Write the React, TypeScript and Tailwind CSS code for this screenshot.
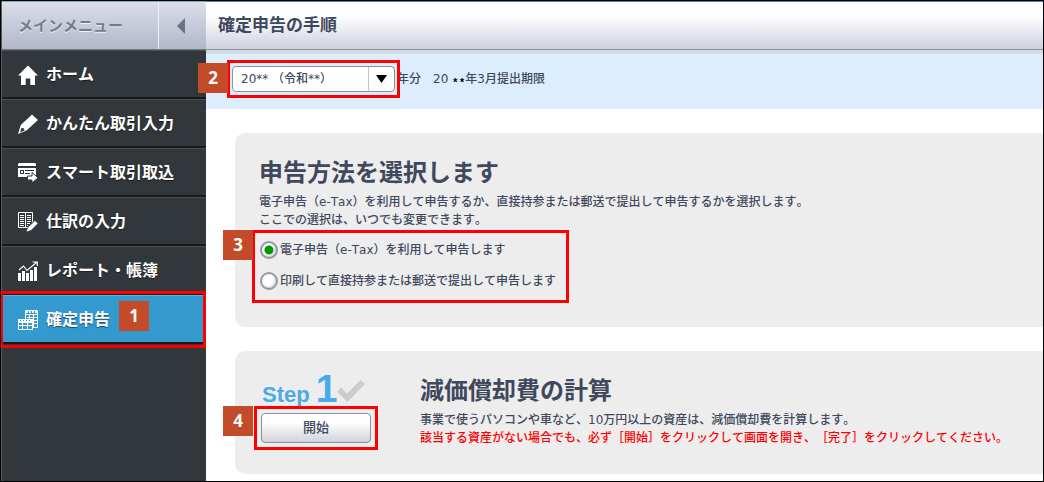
import React from "react";

type IconProps = { className?: string };

const HomeIcon = ({ className }: IconProps) => (
  <svg viewBox="0 0 20 20" className={className} fill="currentColor" aria-hidden="true">
    <path d="M10 0.5 L20 10.5 H17 V20 H12.3 V13.5 H7.7 V20 H3 V10.5 H0 Z" />
  </svg>
);

const PencilIcon = ({ className }: IconProps) => (
  <svg viewBox="0 0 20 20" className={className} fill="currentColor" aria-hidden="true">
    <path fillRule="evenodd" d="M14 0.5 L20 6 L8.5 16.5 L0 20 L2.8 11 Z M3.6 13.8 L2 18.2 L6.5 16.4 L6 14.4 Z" />
  </svg>
);

const CardImportIcon = ({ className }: IconProps) => (
  <svg viewBox="0 0 20 20" className={className} fill="currentColor" aria-hidden="true">
    <path d="M1 0 H17 L18 1 V3 H0 V1 Z" />
    <path fillRule="evenodd" d="M0 5 H18 V14 H0 Z M2 7 V11 H6 V7 Z M3 8 H5 V10 H3 Z M7 7 V8 H16 V7 Z M7 10 V11 H12 V10 Z" />
    <path d="M9.5 13 H14 V9.5 L20 14.8 L14 20 V17 H9.5 Z" stroke="#32373b" strokeWidth="1" />
  </svg>
);

const JournalIcon = ({ className }: IconProps) => (
  <svg viewBox="0 0 20 20" className={className} aria-hidden="true">
    <path d="M0.5 0.5 H14.5 V10 M0.5 0.5 V15.5 H10 M7.5 0.5 V15" fill="none" stroke="currentColor" />
    <path d="M2 3.5 H6 M2 5.5 H6 M2 7.5 H6 M2 9.5 H6 M2 11.5 H6 M2 13.5 H6 M9 3.5 H13 M9 5.5 H13 M9 7.5 H13 M9 9.5 H13 M9 11.5 H12 M9 13.5 H10" stroke="currentColor" />
    <path d="M17 8.5 L20 11.5 L13 18.5 L8 20 L9.8 15.5 Z" fill="currentColor" stroke="#32373b" strokeWidth="0.6" />
  </svg>
);

const ReportIcon = ({ className }: IconProps) => (
  <svg viewBox="0 0 20 20" className={className} aria-hidden="true">
    <path d="M0 12 H3 V20 H0 Z M4 10 H7 V20 H4 Z M8 12 H11 V20 H8 Z M12 9 H15 V20 H12 Z M16 6 H19 V20 H16 Z" fill="currentColor" />
    <path d="M1 9 L5.5 5 L9 9.5 L19 1 M14.5 1 H19.3 V5" fill="none" stroke="currentColor" strokeWidth="1.2" />
  </svg>
);

const TaxIcon = ({ className }: IconProps) => (
  <svg viewBox="0 0 20 20" className={className} aria-hidden="true">
    <path d="M7.5 9 V0.5 H19.5 V17.5 H15" fill="none" stroke="currentColor" />
    <path d="M8 2 H19" stroke="currentColor" strokeWidth="2" strokeDasharray="2 1" />
    <path d="M8 4.5 H19 M9 7.5 H19 M15 10.5 H19 M15 13.5 H19 M11.5 5 V9 M15.5 5 V17" stroke="currentColor" />
    <path fillRule="evenodd" d="M0 9 H15 V20 H0 Z M1 13 V15 H4 V13 Z M5 13 V15 H9 V13 Z M10 13 V15 H14 V13 Z M1 16 V19 H4 V16 Z M5 16 V19 H9 V16 Z M10 16 V19 H14 V16 Z M2 10 V11 H3 V10 Z M5 10 V11 H6 V10 Z M8 10 V11 H9 V10 Z M11 10 V11 H12 V10 Z" fill="currentColor" />
  </svg>
);

const menu = [
  { label: "ホーム", Icon: HomeIcon },
  { label: "かんたん取引入力", Icon: PencilIcon },
  { label: "スマート取引取込", Icon: CardImportIcon },
  { label: "仕訳の入力", Icon: JournalIcon },
  { label: "レポート・帳簿", Icon: ReportIcon },
  { label: "確定申告", Icon: TaxIcon, active: true },
];

const Badge = ({ n, className }: { n: number; className: string }) => (
  <span
    className={`absolute z-20 flex size-[30px] items-center justify-center bg-[#c44b29] font-['Open_Sans',sans-serif] text-[17px] font-bold text-white ${className}`}
  >
    {n}
  </span>
);

const Frame = ({ className }: { className: string }) => (
  <span className={`pointer-events-none absolute z-10 border-[3px] border-[#ff0000] ${className}`} />
);

const Stars = () => (
  <span className="align-sub font-['Liberation_Mono',monospace] text-[11px] leading-none font-bold text-black">**</span>
);

const radioClass =
  "size-[18px] shrink-0 appearance-none rounded-full border-2 border-[#9499a6] bg-white shadow-[inset_-1px_-1px_2px_#c5c8d0] checked:bg-[radial-gradient(circle,#009a00_0_4px,#ffffff_5px)]";

function Sidebar() {
  return (
    <aside className="flex w-[205px] shrink-0 flex-col border-l border-[#5c5c5c] bg-[#32373b]">
      <div className="flex h-[49px] border-t border-b border-t-[#7fa6c4] border-b-[#6f7480] bg-linear-to-b from-[#dcdfe9] to-[#b1b7c9]">
        <h2 className="flex-1 pl-4 text-[15px] leading-[48px] font-bold text-[#727b90] [text-shadow:0_1px_0_#eef0f6]">
          メインメニュー
        </h2>
        <button
          type="button"
          aria-label="メニューを閉じる"
          className="flex w-12 items-center justify-center border-l border-[#f0f2f7] pr-1"
        >
          <svg viewBox="0 0 8 16" className="h-4 w-2" fill="#68728a" aria-hidden="true">
            <path d="M8 0 V16 L0 8 Z" />
          </svg>
        </button>
      </div>
      <nav>
        <ul>
          {menu.map(({ label, Icon, active }) => (
            <li key={label} className="relative">
              <a
                href="#"
                aria-current={active ? "page" : undefined}
                className={`flex h-[49px] items-center gap-2 border-t border-b-2 border-b-[#17191b] pt-px pl-4 text-[16px] font-bold text-white [text-shadow:0_1px_1px_#00000080] ${
                  active ? "border-t-[#5fb2dd] bg-[#3399cf]" : "border-t-[#4a4e52] bg-[#32373b]"
                }`}
              >
                <Icon className="size-5" />
                {label}
              </a>
              {active && (
                <>
                  <Frame className="-top-1 right-0 -bottom-1 -left-0.5" />
                  <Badge n={1} className="top-[6px] left-[117px]" />
                </>
              )}
            </li>
          ))}
        </ul>
      </nav>
    </aside>
  );
}

export default function App() {
  return (
    <div className="flex min-h-screen overflow-hidden border border-black bg-white font-['DejaVu_Sans','Noto_Sans_CJK_JP',sans-serif] text-[12px] leading-[18px] font-medium text-[#40485c] [font-kerning:none] [text-spacing-trim:space-all]">
      <Sidebar />
      <main className="flex min-w-0 flex-1 flex-col">
        <header className="h-[49px] border-t border-b border-t-[#4f87b0] border-b-[#8d9099] bg-linear-to-b from-white from-30% to-[#cdd1dc] pl-3">
          <h1 className="text-[17px] leading-[46px] font-bold">確定申告の手順</h1>
        </header>
        <div className="flex h-[59px] items-center border-t-4 border-[#d3dae2] bg-[#dcedfe] pl-[26px]">
          <div className="relative mr-0.5 mb-1.5 w-[163px]">
            <select
              aria-label="年分"
              className="block h-[26px] w-full appearance-none rounded-[4px] border border-[#8c8f9c] bg-white pl-2 text-[12px]"
            >
              <option>20** （令和**）</option>
            </select>
            <span className="pointer-events-none absolute top-px right-px bottom-px flex w-[26px] items-center justify-center border-l border-[#c4c4c4]">
              <svg viewBox="0 0 11 8" className="h-2 w-[11px]" fill="#000" aria-hidden="true">
                <path d="M0 0 H11 L5.5 8 Z" />
              </svg>
            </span>
            <Frame className="-inset-x-[5px] -inset-y-1.5" />
            <Badge n={2} className="-top-[3px] -left-[34px]" />
          </div>
          <p className="mb-1 whitespace-pre">
            年分　20 <Stars />年3月提出期限
          </p>
        </div>

        <div className="flex flex-col gap-6 pt-6 pb-[7px] pl-[29px]">
          <section className="rounded-l-[10px] bg-[#ededed] pt-5 pb-6 pl-6">
            <h2 className="text-[24px] leading-[40px] font-bold">申告方法を選択します</h2>
            <p>
              電子申告（e-Tax）を利用して申告するか、直接持参または郵送で提出して申告するかを選択します。
              <br />
              ここでの選択は、いつでも変更できます。
            </p>
            <fieldset className="relative mt-px -ml-[7px] flex w-[317px] flex-col gap-[13px] pt-[11px] pb-[13px] pl-2">
              <label className="flex items-center gap-0.5">
                <input type="radio" name="method" defaultChecked className={radioClass} />
                電子申告（e-Tax）を利用して申告します
              </label>
              <label className="flex items-center gap-0.5">
                <input type="radio" name="method" className={radioClass} />
                印刷して直接持参または郵送で提出して申告します
              </label>
              <Frame className="inset-0" />
              <Badge n={3} className="top-0 -left-[29px]" />
            </fieldset>
          </section>

          <section className="flex rounded-l-[10px] bg-[#ededed] pt-5 pb-[27px] pl-6">
            <div className="w-[161px] shrink-0">
              <div className="flex h-9 items-baseline pl-[3px] font-['Liberation_Sans',sans-serif] leading-9 font-bold text-[#4aabe8]">
                <span className="text-[22px]">Step</span>
                <span className="pl-1.5 text-[39px]">1</span>
                <svg viewBox="0 0 28 22" className="h-[22px] w-7" fill="#cccccc" aria-hidden="true">
                  <path d="M0 11.5 L4 7.5 L10 13.5 L23.5 0 L28 4 L10.5 22 Z" />
                </svg>
              </div>
              <div className="relative mt-[6px] ml-0.5 w-[110px]">
                <button
                  type="button"
                  className="block h-[30px] w-full rounded-[4px] border border-[#8b8f9c] bg-linear-to-b from-white from-30% to-[#d0d3dd] text-[13px]"
                >
                  開始
                </button>
                <Frame className="-inset-x-[7px] -inset-y-[7px]" />
                <Badge n={4} className="-top-[7px] -left-[38px]" />
              </div>
            </div>
            <div className="min-w-0">
              <h2 className="text-[24px] leading-[40px] font-bold">減価償却費の計算</h2>
              <p>事業で使うパソコンや車など、10万円以上の資産は、減価償却費を計算します。</p>
              <p className="text-[#ff0000]">
                該当する資産がない場合でも、必ず［開始］をクリックして画面を開き、［完了］をクリックしてください。
              </p>
            </div>
          </section>
        </div>
      </main>
    </div>
  );
}
